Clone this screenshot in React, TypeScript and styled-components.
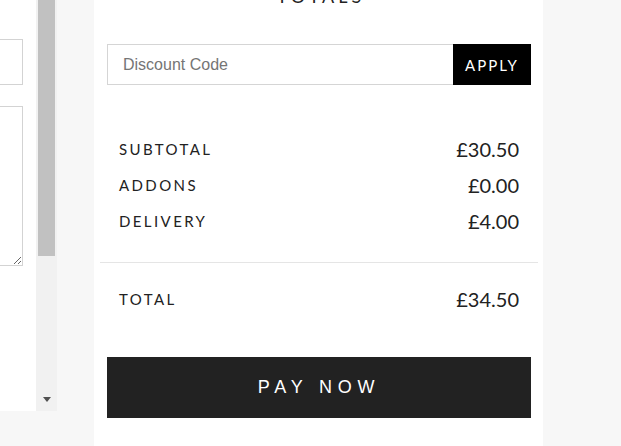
import React from "react"
import styled, { createGlobalStyle } from "styled-components"

const GlobalStyle = createGlobalStyle`
  html, body {
    margin: 0;
    padding: 0;
    background: #f7f7f7;
    overflow: hidden;
  }
  * {
    box-sizing: border-box;
  }
`

const Page = styled.div`
  display: flex;
  flex-direction: row;
  align-items: flex-start;
  width: 621px;
  height: 446px;
`

const LeftPane = styled.div`
  display: flex;
  flex-direction: row;
  width: 57px;
  height: 411px;
  background: #fff;
`

const PaneContent = styled.div`
  display: flex;
  flex-direction: column;
  align-items: flex-end;
  width: 36px;
  padding-right: 13px;
  overflow: hidden;
`

const TextField = styled.input`
  flex-shrink: 0;
  width: 220px;
  height: 46px;
  margin-top: 39px;
  border: 1px solid #d3d3d3;
  outline: none;
`

const TextBox = styled.textarea`
  flex-shrink: 0;
  width: 220px;
  height: 160px;
  margin-top: 21px;
  border: 1px solid #d3d3d3;
  outline: none;
  resize: both;
`

const ScrollTrack = styled.div`
  display: flex;
  flex-direction: column;
  align-items: center;
  width: 21px;
  height: 100%;
  background: #f1f1f1;
`

const ScrollThumb = styled.div`
  width: 17px;
  height: 256px;
  background: #c1c1c1;
`

const ScrollArrow = styled.div`
  width: 0;
  height: 0;
  margin-top: auto;
  margin-bottom: 9px;
  border-left: 4.5px solid transparent;
  border-right: 4.5px solid transparent;
  border-top: 5px solid #505050;
`

const Panel = styled.div`
  display: flex;
  flex-direction: column;
  width: 449px;
  height: 446px;
  margin-left: 37px;
  padding: 0 5px 0 6px;
  background: #fff;
  color: #222;
  font-family: Lato, "Noto Sans", sans-serif;
`

const Title = styled.h2`
  margin: -15px 0 0;
  font-size: 18px;
  line-height: 22px;
  font-weight: 400;
  letter-spacing: 4px;
  text-align: center;
  text-indent: 4px;
`

const DiscountForm = styled.form`
  display: flex;
  flex-direction: row;
  height: 41px;
  margin: 37px 7px 0;
`

const DiscountInput = styled.input`
  flex: 1;
  min-width: 0;
  height: 100%;
  padding: 0 15px;
  border: 1px solid #d5d5d5;
  border-right: none;
  outline: none;
  font-family: "Liberation Sans", Arial, sans-serif;
  font-size: 16px;
  color: #333;

  &::placeholder {
    color: #757575;
  }
`

const ApplyButton = styled.button`
  width: 78px;
  height: 100%;
  padding: 0;
  border: none;
  background: #000;
  color: #fff;
  font-family: Lato, "Noto Sans", sans-serif;
  font-size: 15px;
  letter-spacing: 2px;
  cursor: pointer;
`

const Summary = styled.div<{ $top: number; $bottom: number; $divider?: boolean }>`
  display: flex;
  flex-direction: column;
  padding: ${({ $top, $bottom }) => `${$top}px 19px ${$bottom}px`};
  border-bottom: ${({ $divider }) => ($divider ? "1px solid #e5e5e5" : "none")};
`

const Row = styled.div`
  display: flex;
  flex-direction: row;
  justify-content: space-between;
  align-items: center;
  height: 36px;
`

const Label = styled.span`
  font-size: 15px;
  letter-spacing: 2.4px;
  text-transform: uppercase;
`

const Amount = styled.span`
  font-size: 20px;
  color: #222;
`

const PayButton = styled.button`
  height: 61px;
  margin: 40px 7px 0;
  border: none;
  background: #222;
  color: #fff;
  font-family: "Liberation Sans", Arial, sans-serif;
  font-size: 18px;
  letter-spacing: 5.8px;
  cursor: pointer;
`

const lines = [
  { label: "Subtotal", amount: "£30.50" },
  { label: "Addons", amount: "£0.00" },
  { label: "Delivery", amount: "£4.00" },
]

export default function App() {
  return (
    <>
      <GlobalStyle />
      <Page>
        <LeftPane>
          <PaneContent>
            <TextField type="text" />
            <TextBox />
          </PaneContent>
          <ScrollTrack>
            <ScrollThumb />
            <ScrollArrow />
          </ScrollTrack>
        </LeftPane>
        <Panel>
          <Title>TOTALS</Title>
          <DiscountForm onSubmit={(e) => e.preventDefault()}>
            <DiscountInput type="text" placeholder="Discount Code" />
            <ApplyButton type="submit">APPLY</ApplyButton>
          </DiscountForm>
          <Summary $top={46} $bottom={23} $divider>
            {lines.map((line) => (
              <Row key={line.label}>
                <Label>{line.label}</Label>
                <Amount>{line.amount}</Amount>
              </Row>
            ))}
          </Summary>
          <Summary $top={18} $bottom={0}>
            <Row>
              <Label>Total</Label>
              <Amount>£34.50</Amount>
            </Row>
          </Summary>
          <PayButton type="button">PAY NOW</PayButton>
        </Panel>
      </Page>
    </>
  )
}
